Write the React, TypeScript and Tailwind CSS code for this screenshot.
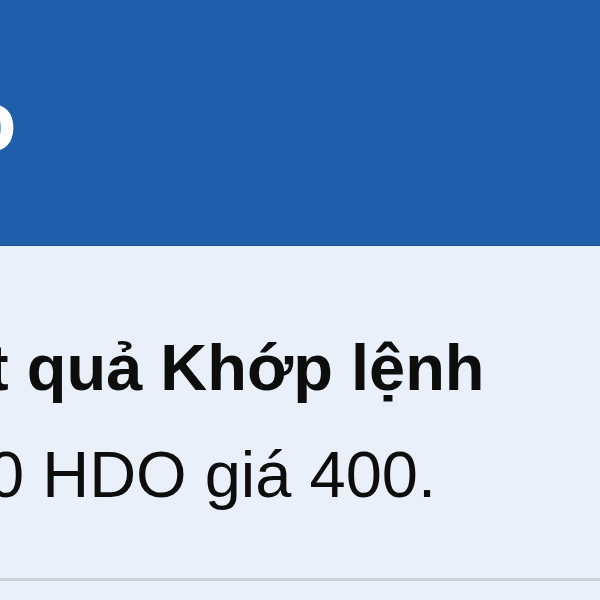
export default function App() {
  return (
    <div className="w-[600px] h-[600px] overflow-hidden bg-[#eaf0f9]" style={{ fontFamily: '"Liberation Sans", Arial, sans-serif' }}>
      <div className="h-[246px] bg-[#1f5fa9] border-b border-[#1a4f8e] pt-[77px] overflow-hidden">
        <div className="-ml-[37px] text-[88px] leading-[88px] font-bold text-white whitespace-nowrap">o</div>
      </div>
      <div className="pt-[82px] overflow-hidden">
        <div className="-ml-[13px] text-[65px] leading-[80px] font-bold text-[#0d0d0d] whitespace-nowrap">t quả Khớp lệnh</div>
        <div className="-ml-[12px] mt-[27px] text-[65px] leading-[80px] text-[#0d0d0d] whitespace-nowrap">0 HDO giá 400.</div>
        <div className="mt-[63px] h-[3px] bg-[#ccd0d7]" />
      </div>
    </div>
  );
}
